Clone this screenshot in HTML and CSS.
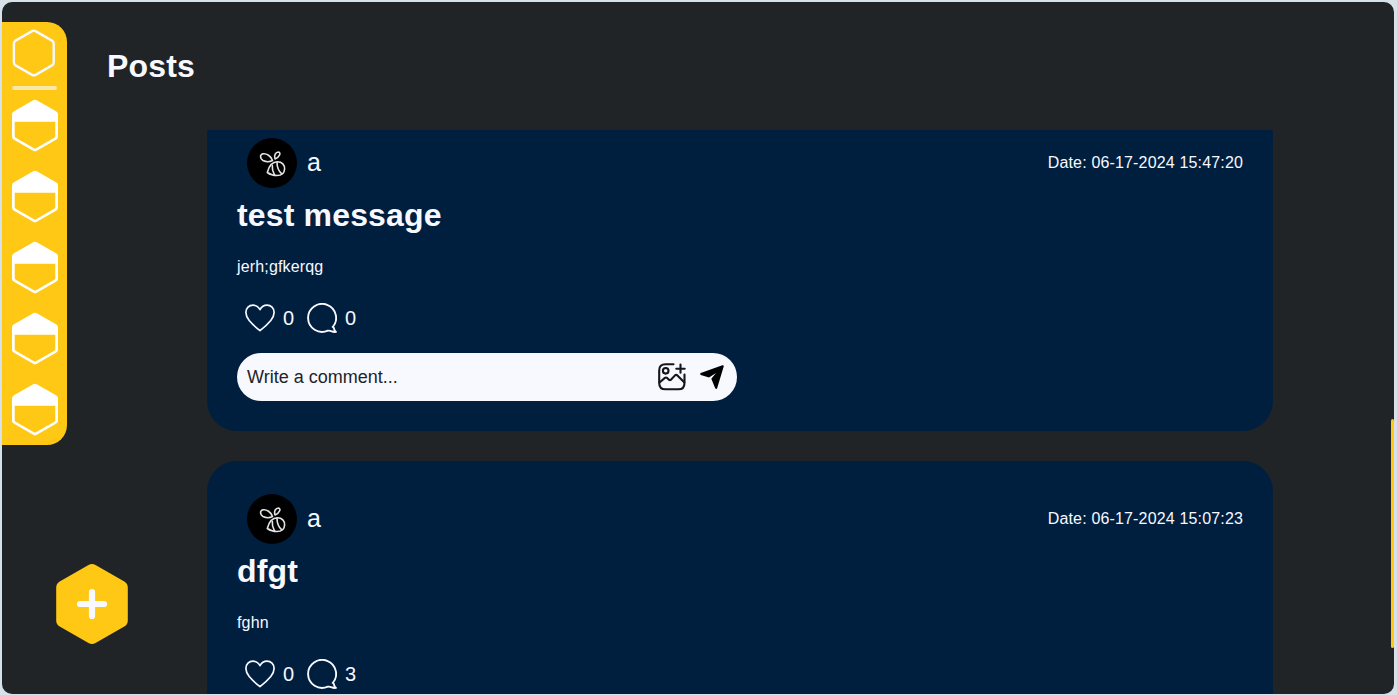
FILE: index.html
```
<!DOCTYPE html>
<html lang="en">
<head>
<meta charset="utf-8">
<title>Posts</title>
<link rel="stylesheet" href="styles.css">
</head>
<body>
<svg class="defs" aria-hidden="true">
  <symbol id="hive" viewBox="0 0 46 52" preserveAspectRatio="none">
    <path d="M21.2 1.200Q23 .2 24.800 1.200L44 12Q46 13 46 15V37Q46 39 44 40L24.800 50.800Q23 51.800 21.200 50.800L2 40Q0 39 0 37V15Q0 13 2 12ZM2.700 22.300V36.300Q2.700 37.400 3.700 38L22 48.200Q23 48.700 24 48.200L42.300 38Q43.300 37.400 43.300 36.300V22.300Z" fill="#fff" fill-rule="evenodd"/>
  </symbol>
  <symbol id="bee" viewBox="0 0 50 50">
    <g fill="none" stroke="#e4e4e4" stroke-width="1.600" stroke-linecap="round" stroke-linejoin="round">
      <path d="M25.500 22.500C24 18 19.500 15.200 16 15.800C12.500 16.800 13 20.800 16 22.500C19 24 23 23.800 25.500 22.500Z"/>
      <path d="M28 21C26.800 17.500 28.500 14 31.500 14C34 14.500 33.300 18.500 28 21Z"/>
      <path d="M20.300 34.500C21.800 28.500 25.500 23.800 30.500 23.800C35 23.800 37.800 27 37.600 31C37.400 35 34.500 37.500 30 37.500C26.500 37.500 23.200 36.600 20.300 34.500Z"/>
      <path d="M25.300 27.200C25 30.500 25.800 34 27.500 37M30 24.200C30 29 31.500 33 34.800 35.800"/>
    </g>
  </symbol>
  <symbol id="heart" viewBox="0 0 30 30">
    <path d="M15 27.700C12 25.400 7.500 21.400 4.200 17.500C1.700 14.300 .9 12 .9 9.500C.9 5.100 4.100 2.200 8 2.200C11 2.200 13.500 3.900 15 6.700C16.500 3.900 19 2.200 22 2.200C25.900 2.200 29.100 5.100 29.100 9.500C29.100 12 28.300 14.300 25.800 17.500C22.500 21.400 18 25.400 15 27.700Z" fill="none" stroke="#f8f8ff" stroke-width="1.700" stroke-linejoin="round"/>
  </symbol>
  <symbol id="bubble" viewBox="0 0 30 30">
    <path d="M25.200 24.600A14 14 0 1 0 20.800 27.700Q22.500 27.400 24.200 28.200Q26.500 29.200 29 28.900Q27.200 27.400 26.800 24.800Q26.300 23.500 25.200 24.600" fill="none" stroke="#f8f8ff" stroke-width="1.900" stroke-linejoin="round"/>
  </symbol>
  <symbol id="image" viewBox="0 0 30 30">
    <g fill="none" stroke="#15151a" stroke-width="2.100" stroke-linecap="round" stroke-linejoin="round">
      <path d="M16.500 2.300H8.500Q2.200 2.300 2.200 8.500V21Q2.200 27.300 8.500 27.300H21.500Q27.500 27.300 27.500 21V12.500"/>
      <circle cx="8.700" cy="8.800" r="2.800"/>
      <path d="M23.500 2.500V10.800M19.300 6.700H27.700"/>
      <path d="M2.800 20.300L7.900 15.900Q9 15.100 10.100 15.900L12.200 17.900Q13.100 18.500 13.900 17.700L18 13.400Q19.200 12.400 20.400 13.400L27.200 20.200"/>
    </g>
  </symbol>
  <symbol id="send" viewBox="0 0 24 24">
    <path d="M.7 8.100L22.400 .2Q24.100 -.2 23.700 1.600L17.200 22.900Q16.500 24.700 15.200 23.200L11.300 13.700L16 8L9 12.600L.8 9.900Q-.4 9 .7 8.100Z" fill="#000"/>
  </symbol>
</svg>

<div class="window">
  <aside class="side">
    <nav class="rail">
      <svg class="rail-home" viewBox="0 0 43 48"><path d="M20.100 2.100Q21.800 1.100 23.500 2.100L40 11.600Q41.700 12.600 41.700 14.500V33.500Q41.700 35.400 40 36.400L23.500 45.900Q21.800 46.900 20.100 45.900L3.600 36.400Q1.900 35.400 1.900 33.500V14.500Q1.900 12.600 3.600 11.600Z" fill="none" stroke="#f8f8ff" stroke-width="2.400"/></svg>
      <span class="rail-line"></span>
      <div class="rail-list">
        <svg class="rail-item"><use href="#hive"/></svg>
        <svg class="rail-item"><use href="#hive"/></svg>
        <svg class="rail-item"><use href="#hive"/></svg>
        <svg class="rail-item"><use href="#hive"/></svg>
        <svg class="rail-item"><use href="#hive"/></svg>
      </div>
    </nav>
  </aside>

  <main class="main">
    <h1 class="page-title">Posts</h1>
    <section class="feed">
      <article class="post post-scrolled">
        <header class="post-head">
          <span class="avatar"><svg class="bee"><use href="#bee"/></svg></span>
          <span class="author">a</span>
          <time class="date">Date: 06-17-2024 15:47:20</time>
        </header>
        <h2 class="post-title">test message</h2>
        <p class="post-text">jerh;gfkerqg</p>
        <div class="actions">
          <svg class="action-icon"><use href="#heart"/></svg><span class="count">0</span>
          <svg class="action-icon"><use href="#bubble"/></svg><span class="count">0</span>
        </div>
        <div class="comment">
          <span class="comment-text">Write a comment...</span>
          <svg class="image-icon"><use href="#image"/></svg>
          <svg class="send-icon"><use href="#send"/></svg>
        </div>
      </article>
      <article class="post">
        <header class="post-head">
          <span class="avatar"><svg class="bee"><use href="#bee"/></svg></span>
          <span class="author">a</span>
          <time class="date">Date: 06-17-2024 15:07:23</time>
        </header>
        <h2 class="post-title">dfgt</h2>
        <p class="post-text">fghn</p>
        <div class="actions">
          <svg class="action-icon"><use href="#heart"/></svg><span class="count">0</span>
          <svg class="action-icon"><use href="#bubble"/></svg><span class="count">3</span>
        </div>
      </article>
    </section>
  </main>

  <button class="add" aria-label="New post">
    <svg class="add-icon" viewBox="0 0 72 80"><path d="M32.500 1Q36 -1 39.500 1L68.300 17.500Q71.800 19.500 71.800 23.500V56.500Q71.800 60.500 68.300 62.500L39.500 79Q36 81 32.500 79L3.700 62.500Q.2 60.500 .2 56.500V23.500Q.2 19.500 3.700 17.500Z" fill="#ffc814"/><path d="M36 28V52M24 40H48" stroke="#f8f8ff" stroke-width="6.200" stroke-linecap="round"/></svg>
  </button>
  <span class="scroll-thumb"></span>
</div>
</body>
</html>
```
FILE: styles.css
```
* {
  box-sizing: border-box;
}

body {
  margin: 0;
  height: 695px;
  padding: 2px 3px 1px 2px;
  overflow: hidden;
  background: #d6e1ea;
  color: #f8f8ff;
  font-family: "Liberation Sans", Arial, sans-serif;
  font-size: 16px;
  letter-spacing: 0.16px;
}

svg {
  display: block;
  flex: none;
}

.defs {
  position: absolute;
  width: 0;
  height: 0;
}

.window {
  position: relative;
  display: flex;
  height: 692px;
  border-radius: 10px;
  background: #212427;
}

.side {
  width: 105px;
  padding-top: 20px;
}

.rail {
  display: flex;
  flex-direction: column;
  width: 65px;
  height: 423px;
  padding: 7px 9px 0 10px;
  border-radius: 0 20px 20px 0;
  background: #ffc814;
}

.rail-home {
  width: 43px;
  height: 48px;
}

.rail-line {
  width: 45px;
  height: 4px;
  margin-top: 9px;
  border-radius: 2px;
  background: #fbe7a9;
}

.rail-list {
  display: grid;
  gap: 18px;
  margin-top: 9px;
}

.rail-item {
  width: 46px;
  height: 53px;
}

.main {
  display: flex;
  flex-direction: column;
  flex: 1;
}

.page-title {
  margin: 46px 0 0;
  font-size: 32px;
  line-height: 37px;
}

.feed {
  width: 1066px;
  height: 564px;
  margin: 45px 0 0 100px;
  overflow: hidden;
}

.post {
  height: 326px;
  margin-bottom: 30px;
  padding: 30px;
  border-radius: 30px;
  background: #001f3f;
}

.post-scrolled {
  margin-top: -25px;
}

.post-head {
  display: flex;
  align-items: center;
  height: 56px;
  padding-left: 10px;
}

.avatar {
  width: 50px;
  height: 50px;
  border-radius: 50%;
  background: #000;
}

.bee {
  width: 50px;
  height: 50px;
}

.author {
  margin-left: 10px;
  padding-bottom: 2px;
  font-size: 25px;
  line-height: 28px;
}

.date {
  margin-left: auto;
}

.post-title {
  margin: 6px 0 0;
  font-size: 32px;
  line-height: 37px;
}

.post-text {
  margin: 24px 0 0;
  line-height: 18px;
}

.actions {
  display: flex;
  align-items: center;
  height: 30px;
  margin-top: 27px;
  padding-left: 8px;
  font-size: 20px;
}

.action-icon {
  width: 30px;
  height: 30px;
}

.count {
  width: 11px;
  margin: 0 13px 0 8px;
}

.comment {
  display: flex;
  align-items: center;
  width: 500px;
  height: 48px;
  margin-top: 20px;
  padding: 0 13px 0 10px;
  border-radius: 24px;
  background: #f8f8ff;
  color: #212427;
  font-size: 18px;
  letter-spacing: 0;
}

.comment-text {
  flex: 1;
}

.image-icon {
  width: 30px;
  height: 30px;
  margin-right: 13px;
}

.send-icon {
  width: 24px;
  height: 24px;
}

.add {
  position: absolute;
  left: 54px;
  top: 562px;
  padding: 0;
  border: 0;
  background: none;
}

.add-icon {
  width: 72px;
  height: 80px;
}

.scroll-thumb {
  position: absolute;
  right: 0;
  top: 417px;
  width: 3px;
  height: 229px;
  border-radius: 2px;
  background: #ffc814;
}
```
